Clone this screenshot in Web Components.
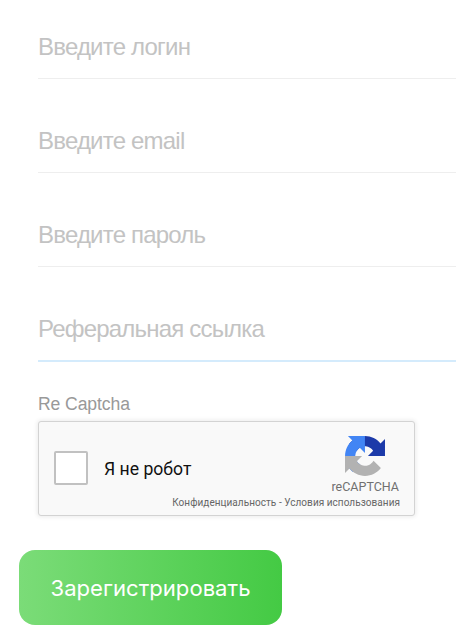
<!DOCTYPE html>
<html lang="ru"><head><meta charset="utf-8"><title>Регистрация</title>
<style>
html,body{margin:0;padding:0;background:#fff;overflow:hidden}
body{font-family:"Liberation Sans",Arial,sans-serif}
</style></head><body>
<reg-form>
<text-field placeholder="Введите логин"></text-field>
<text-field placeholder="Введите email"></text-field>
<text-field placeholder="Введите пароль"></text-field>
<text-field placeholder="Реферальная ссылка" focused></text-field>
<captcha-box label="Re Captcha"></captcha-box>
<green-button>Зарегистрировать</green-button>
</reg-form>
<script>
class RegForm extends HTMLElement{constructor(){super();this.attachShadow({mode:"open"}).innerHTML=`<style>
:host{display:flex;flex-direction:column;width:456px;height:633px;box-sizing:border-box;padding-top:16px;overflow:hidden}
</style><slot></slot>`}}
class TextField extends HTMLElement{connectedCallback(){const f=this.hasAttribute("focused");this.attachShadow({mode:"open"}).innerHTML=`<style>
:host{display:block;margin-left:38px;box-sizing:border-box;height:${f?64:63}px;margin-bottom:${f?32:31}px;border-bottom:${f?"2px solid #d4ebfc":"1px solid #eeeeee"}}
input{display:block;width:100%;height:61px;border:0;outline:0;padding:0;background:transparent;font:24px/28px "Liberation Sans",Arial,sans-serif;letter-spacing:-.8px;color:#333}
input::placeholder{color:#c3c3c3;opacity:1}
</style><input type="text" placeholder="${this.getAttribute("placeholder")}">`}}
class CaptchaBox extends HTMLElement{connectedCallback(){this.attachShadow({mode:"open"}).innerHTML=`<style>
:host{display:block;margin-left:38px}
.lab{font:17.6px/20px "Liberation Sans",Arial,sans-serif;color:#999;letter-spacing:-.1px;margin-bottom:7px}
.box{width:377px;height:95px;box-sizing:border-box;background:#f9f9f9;border:1px solid #d3d3d3;border-radius:3px;box-shadow:0 0 4px 1px rgba(0,0,0,.08);display:flex;align-items:center;padding:0 15px;position:relative;justify-content:space-between}
.l{display:flex;align-items:center;gap:16px}
.cb{width:34px;height:34px;box-sizing:border-box;background:#fff;border:2px solid #c1c1c1;border-radius:2px;margin-top:-2px}
.t{font:17.6px/22px Roboto,sans-serif;color:#111}
.r{display:flex;flex-direction:column;align-items:center;align-self:flex-start;padding-top:14px}
.brand{font:12.5px/14px Roboto,sans-serif;color:#707070;margin-top:4px}
.links{font:10px/12px Roboto,sans-serif;letter-spacing:.05px;color:#666;position:absolute;right:14px;bottom:6px;white-space:nowrap}
svg{display:block}
</style><div class="lab">${this.getAttribute("label")}</div>
<div class="box"><div class="l"><div class="cb"></div><div class="t">Я не робот</div></div>
<div class="r"><svg width="40" height="40" viewBox="0 0 64 64"><defs><path id="a" d="M64 31.955l-.033-1.37V4.687l-7.16 7.16C50.948 4.674 42.033.093 32.05.093c-10.4 0-19.622 4.96-25.458 12.64l11.736 11.86a15.55 15.55 0 0 1 4.754-5.334c2.05-1.6 4.952-2.906 8.968-2.906.485 0 .86.057 1.135.163 4.976.393 9.29 3.14 11.83 7.125l-8.307 8.307c10.522-.04 22.4-.066 27.295.001"/></defs>
<use href="#a" fill="#1c3aa9"/><use href="#a" fill="#4285f4" transform="rotate(-90 32 32)"/><use href="#a" fill="#b2b2b2" transform="rotate(180 32 32)"/></svg><div class="brand">reCAPTCHA</div></div>
<div class="links">Конфиденциальность - Условия использования</div></div>`}}
class GreenButton extends HTMLElement{constructor(){super();this.attachShadow({mode:"open"}).innerHTML=`<style>
:host{display:flex;align-items:center;justify-content:center;width:263px;height:75px;margin:34px 0 0 19px;border-radius:16px;background:linear-gradient(90deg,#7bdc78 0%,#44ca44 100%);color:#fff;font:22.1px/24px Inter,sans-serif}
</style><slot></slot>`}}
customElements.define("reg-form",RegForm);
customElements.define("text-field",TextField);
customElements.define("captcha-box",CaptchaBox);
customElements.define("green-button",GreenButton);
</script></body></html>
